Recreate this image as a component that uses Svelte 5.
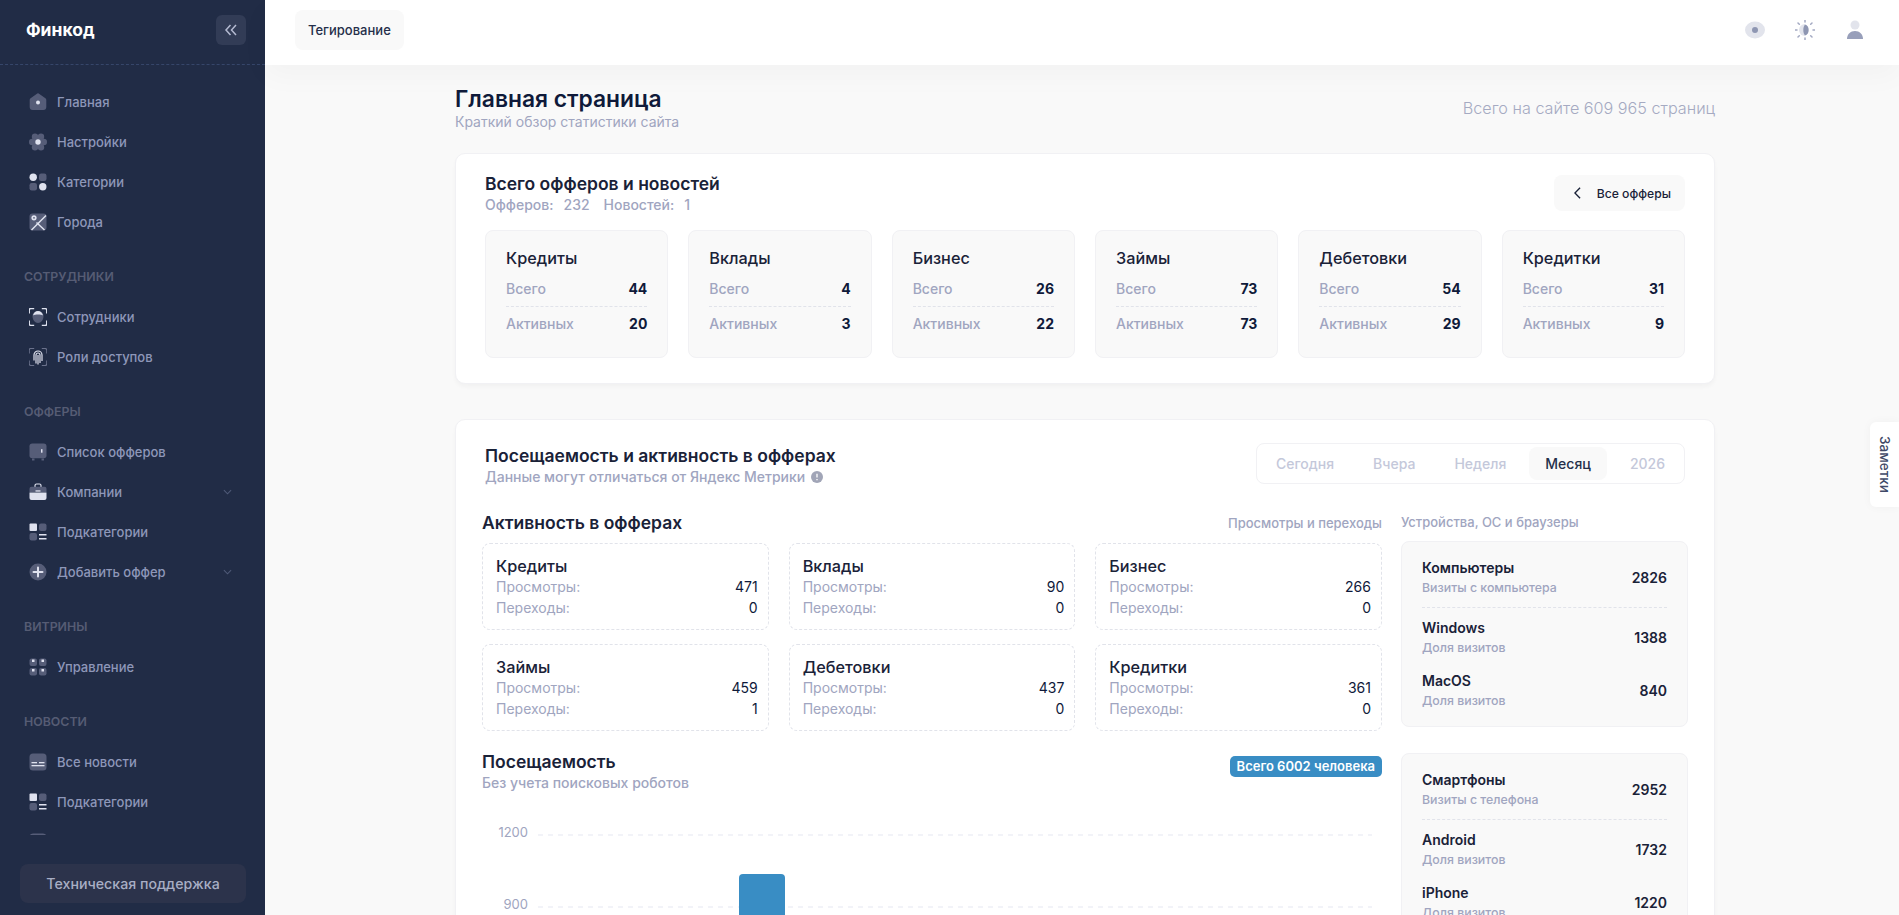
<script>
    const navGroups = [
        { items: [
            { icon: "home", label: "Главная" },
            { icon: "gear", label: "Настройки" },
            { icon: "cats", label: "Категории" },
            { icon: "map", label: "Города" }
        ] },
        { title: "Сотрудники", items: [
            { icon: "face", label: "Сотрудники" },
            { icon: "finger", label: "Роли доступов" }
        ] },
        { title: "Офферы", items: [
            { icon: "safe", label: "Список офферов" },
            { icon: "case", label: "Компании", arrow: true },
            { icon: "subs", label: "Подкатегории" },
            { icon: "plus", label: "Добавить оффер", arrow: true }
        ] },
        { title: "Витрины", items: [
            { icon: "grid", label: "Управление" }
        ] },
        { title: "Новости", items: [
            { icon: "news", label: "Все новости" },
            { icon: "subs", label: "Подкатегории" },
            { icon: "news", label: "" }
        ] }
    ];

    const totals = [
        { name: "Кредиты", all: 44, active: 20 },
        { name: "Вклады", all: 4, active: 3 },
        { name: "Бизнес", all: 26, active: 22 },
        { name: "Займы", all: 73, active: 73 },
        { name: "Дебетовки", all: 54, active: 29 },
        { name: "Кредитки", all: 31, active: 9 }
    ];

    const activity = [
        { name: "Кредиты", views: 471, clicks: 0 },
        { name: "Вклады", views: 90, clicks: 0 },
        { name: "Бизнес", views: 266, clicks: 0 },
        { name: "Займы", views: 459, clicks: 1 },
        { name: "Дебетовки", views: 437, clicks: 0 },
        { name: "Кредитки", views: 361, clicks: 0 }
    ];

    const tabs = ["Сегодня", "Вчера", "Неделя", "Месяц", "2026"];

    const devices = [
        { head: { name: "Компьютеры", sub: "Визиты с компьютера", value: 2826 }, rows: [
            { name: "Windows", sub: "Доля визитов", value: 1388 },
            { name: "MacOS", sub: "Доля визитов", value: 840 }
        ] },
        { head: { name: "Смартфоны", sub: "Визиты с телефона", value: 2952 }, rows: [
            { name: "Android", sub: "Доля визитов", value: 1732 },
            { name: "iPhone", sub: "Доля визитов", value: 1220 }
        ] }
    ];
</script>

{#snippet navIcon(name)}
    <svg class="nav-icon" viewBox="0 0 18 18" width="18" height="18">
        {#if name === "home"}
            <path class="d" d="M7.6.9a2.3 2.3 0 0 1 2.8 0l6 4.3c.6.4.9 1 .9 1.7V14a3 3 0 0 1-3 3H3.700a3 3 0 0 1-3-3V6.900c0-.7.3-1.300.9-1.700z" />
            <circle class="l" cx="9" cy="9.500" r="2" />
        {:else if name === "gear"}
            <circle class="d" cx="6" cy="3.800" r="3.200" />
            <circle class="d" cx="12" cy="3.800" r="3.200" />
            <circle class="d" cx="3.200" cy="9" r="3.200" />
            <circle class="d" cx="14.800" cy="9" r="3.200" />
            <circle class="d" cx="6" cy="14.200" r="3.200" />
            <circle class="d" cx="12" cy="14.200" r="3.200" />
            <circle class="d" cx="9" cy="9" r="5" />
            <circle class="l" cx="9" cy="9" r="2.700" />
        {:else if name === "cats"}
            <circle class="l" cx="4.200" cy="4.200" r="3.700" />
            <rect class="d" x="10" y=".5" width="7.500" height="7.500" rx="2.200" />
            <rect class="d" x=".5" y="10" width="7.500" height="7.500" rx="2.200" />
            <circle class="l" cx="13.800" cy="13.800" r="3.700" />
        {:else if name === "map"}
            <rect class="d" x=".5" y=".5" width="17" height="17" rx="3" />
            <path d="M2.500 17 17 2.500M7.500 9.500l8 7.500" stroke="#dfe2ef" stroke-width="1.500" fill="none" />
            <circle class="l" cx="5" cy="4.800" r="2.600" />
            <circle class="d" cx="5" cy="4.800" r=".9" />
        {:else if name === "face"}
            <path class="line thick" d="M.2 5.500V2.200A1.700 1.700 0 0 1 1.900.5h3.300M12.800.5h3.300a1.700 1.700 0 0 1 1.700 1.700v3.300M17.800 12.500v3.300a1.700 1.700 0 0 1-1.700 1.700h-3.300M5.200 17.500H1.900a1.700 1.700 0 0 1-1.700-1.700v-3.300" />
            <path class="d" d="M3.500 8c0-3 2.500-4.800 5.500-4.800S14.500 5 14.500 8c0 4-2.500 7-5.500 7S3.500 12 3.500 8z" />
            <path class="l" d="M4 7.500C4.500 4.800 6.500 3 9 3s4.500 1.800 5 4.500C12 6.200 6 6.200 4 7.500z" />
        {:else if name === "finger"}
            <path class="line dim" d="M.2 5.500V2.200A1.700 1.700 0 0 1 1.900.5h3.300M12.800.5h3.300a1.700 1.700 0 0 1 1.700 1.700v3.300M17.800 12.500v3.300a1.700 1.700 0 0 1-1.700 1.700h-3.300M5.200 17.500H1.900a1.700 1.700 0 0 1-1.700-1.700v-3.300" />
            <path class="line" d="M5 12.500V7a4 4 0 0 1 8 0v6M7 15.500V7a2 2 0 0 1 4 0v8M9 7v9.500" />
        {:else if name === "safe"}
            <rect class="d" x=".5" y=".5" width="17" height="14.800" rx="2.800" />
            <rect class="d" x="3" y="15.500" width="2.500" height="2" />
            <rect class="d" x="12.500" y="15.500" width="2.500" height="2" />
            <rect class="l" x="12" y="6.200" width="1.500" height="3.500" />
        {:else if name === "case"}
            <path class="line" d="M6 4V2.500a1.500 1.500 0 0 1 1.500-1.500h3A1.500 1.500 0 0 1 12 2.500V4" />
            <path class="d" d="M2.500 3.700h13a2 2 0 0 1 2 2V9H.5V5.700a2 2 0 0 1 2-2z" />
            <path class="l" d="M.5 9.500h17V15a2 2 0 0 1-2 2h-13a2 2 0 0 1-2-2z" />
            <rect class="l" x="6.500" y="7.300" width="5" height="1.300" />
        {:else if name === "subs"}
            <rect class="l" x=".5" y=".5" width="7.500" height="7.500" rx="1" />
            <rect class="d" x="10" y=".5" width="7.500" height="7.500" rx="2" />
            <rect class="d" x=".5" y="10" width="7.500" height="7.500" rx="2" />
            <rect class="l" x="10" y="11" width="7.500" height="1.500" />
            <rect class="l" x="10" y="15" width="7.500" height="1.500" />
        {:else if name === "plus"}
            <circle class="d" cx="9" cy="9" r="8.500" />
            <path d="M9 4.500v9M4.500 9h9" stroke="#dfe2ef" stroke-width="2" stroke-linecap="round" />
        {:else if name === "grid"}
            <rect class="d" x=".5" y=".5" width="7.500" height="7.500" rx="2" />
            <rect class="d" x="10" y=".5" width="7.500" height="7.500" rx="2" />
            <rect class="d" x=".5" y="10" width="7.500" height="7.500" rx="2" />
            <rect class="d" x="10" y="10" width="7.500" height="7.500" rx="2" />
            <rect class="l" x="3" y="1.500" width="2.500" height="2.500" />
            <rect class="l" x="12.500" y="1.500" width="2.500" height="2.500" />
            <rect class="l" x="3" y="11" width="2.500" height="2.500" />
            <rect class="l" x="12.500" y="11" width="2.500" height="2.500" />
        {:else if name === "news"}
            <rect class="d" x=".5" y=".5" width="17" height="17" rx="3.500" />
            <rect class="l" x="2.500" y="9" width="5.500" height="1.300" />
            <rect class="l" x="10" y="9" width="5.500" height="1.300" />
            <rect class="l" x="2.500" y="12" width="13" height="1.300" />
        {/if}
    </svg>
{/snippet}

{#snippet deviceRow(row)}
    <div class="device-row">
        <div>
            <div class="device-name">{row.name}</div>
            <div class="device-sub">{row.sub}</div>
        </div>
        <div class="device-value">{row.value}</div>
    </div>
{/snippet}

<div class="layout">
    <aside class="sidebar">
        <div class="brand">
            <span class="logo">Финкод</span>
            <button class="collapse" type="button" aria-label="Свернуть">
                <svg viewBox="0 0 14 14" width="14" height="14" fill="none" stroke="#b5bbd2" stroke-width="1.500">
                    <path d="M6.500 2 2 7l4.500 5M12 2 7.500 7l4.500 5" />
                </svg>
            </button>
        </div>

        <nav class="nav">
            {#each navGroups as group}
                {#if group.title}
                    <div class="nav-title">{group.title}</div>
                {/if}
                {#each group.items as item}
                    <div class="nav-item">
                        {@render navIcon(item.icon)}
                        <span class="nav-label">{item.label}</span>
                        {#if item.arrow}
                            <svg class="nav-arrow" viewBox="0 0 10 6" width="9" height="6" fill="none" stroke="#4f5a78" stroke-width="1.200">
                                <path d="M1 1l4 4 4-4" />
                            </svg>
                        {/if}
                    </div>
                {/each}
            {/each}
        </nav>

        <div class="support-wrap">
            <button class="support" type="button">Техническая поддержка</button>
        </div>
    </aside>

    <div class="main">
        <header class="topbar">
            <button class="tag-btn" type="button">Тегирование</button>
            <div class="top-icons">
                <svg viewBox="0 0 20 20" width="20" height="20">
                    <ellipse cx="10" cy="10" rx="10" ry="8.500" fill="#e2e4ec" />
                    <circle cx="10" cy="10" r="3" fill="#8e96b2" />
                </svg>
                <svg viewBox="0 0 20 20" width="20" height="20">
                    <path d="M10 4a6 6 0 0 0 0 12z" fill="#e2e4ec" />
                    <path d="M10 4.500c2.500.5 3.700 3 3.700 5.500s-1.200 5-3.700 5.500c-1.200-1.500-1.700-3.500-1.700-5.500s.5-4 1.700-5.500z" fill="#8e96b2" />
                    <path d="M10 0v2M10 18v2M0 10h2M18 10h2M3 3l1.300 1.300M15.700 15.700 17 17M3 17l1.300-1.300M15.700 4.300 17 3" stroke="#a3a9c2" stroke-width="1.500" stroke-linecap="round" />
                </svg>
                <svg viewBox="0 0 20 20" width="20" height="20">
                    <circle cx="10" cy="5" r="4.500" fill="#e2e4ec" />
                    <path d="M2 19c0-5 3.500-8 8-8s8 3 8 8z" fill="#989fba" />
                </svg>
            </div>
        </header>

        <main class="content">
            <div class="page-head">
                <div>
                    <h1>Главная страница</h1>
                    <p>Краткий обзор статистики сайта</p>
                </div>
                <div class="page-total">Всего на сайте 609 965 страниц</div>
            </div>

            <section class="card card-totals">
                <div class="card-head">
                    <div>
                        <h2>Всего офферов и новостей</h2>
                        <div class="muted big counts">
                            <span>Офферов:</span><span class="count">232</span>
                            <span class="next">Новостей:</span><span class="count">1</span>
                        </div>
                    </div>
                    <button class="all-btn" type="button">
                        <svg viewBox="0 0 8 14" width="7" height="12" fill="none" stroke="#1a2238" stroke-width="1.600">
                            <path d="M7 1 1 7l6 6" />
                        </svg>
                        Все офферы
                    </button>
                </div>
                <div class="totals">
                    {#each totals as t}
                        <div class="total">
                            <div class="total-name">{t.name}</div>
                            <div class="total-row first"><span>Всего</span><b>{t.all}</b></div>
                            <div class="total-row"><span>Активных</span><b>{t.active}</b></div>
                        </div>
                    {/each}
                </div>
            </section>

            <section class="card card-stats">
                <div class="card-head stats-head">
                    <div>
                        <h2>Посещаемость и активность в офферах</h2>
                        <div class="muted big note">
                            Данные могут отличаться от Яндекс Метрики
                            <svg viewBox="0 0 12 12" width="12" height="12">
                                <circle cx="6" cy="6" r="6" fill="#a1a5b7" />
                                <path d="M6 2.800v3.600M6 8v1.200" stroke="#fff" stroke-width="1.300" />
                            </svg>
                        </div>
                    </div>
                    <div class="tabs">
                        {#each tabs as tab}
                            <span class="tab" class:active={tab === "Месяц"}>{tab}</span>
                        {/each}
                    </div>
                </div>

                <div class="columns">
                    <div class="col-left">
                        <div class="section-head">
                            <h3>Активность в офферах</h3>
                            <span class="muted">Просмотры и переходы</span>
                        </div>
                        <div class="activity">
                            {#each activity as a}
                                <div class="act">
                                    <div class="act-name">{a.name}</div>
                                    <div class="act-row"><span>Просмотры:</span><em>{a.views}</em></div>
                                    <div class="act-row"><span>Переходы:</span><em>{a.clicks}</em></div>
                                </div>
                            {/each}
                        </div>

                        <div class="visits-head">
                            <div>
                                <h3>Посещаемость</h3>
                                <div class="muted big">Без учета поисковых роботов</div>
                            </div>
                            <span class="badge">Всего 6002 человека</span>
                        </div>
                        <svg class="chart" viewBox="0 0 900 100" width="900" height="100">
                            <text x="46" y="22">1200</text>
                            <line x1="56" x2="890" y1="20" y2="20" />
                            <text x="46" y="94">900</text>
                            <line x1="56" x2="890" y1="92" y2="92" />
                            <path class="bar" d="M257 110V63a4 4 0 0 1 4-4h38a4 4 0 0 1 4 4v47z" />
                        </svg>
                    </div>

                    <div class="col-right">
                        <div class="muted side-title">Устройства, ОС и браузеры</div>
                        {#each devices as d}
                            <div class="panel">
                                <div class="panel-head">{@render deviceRow(d.head)}</div>
                                {#each d.rows as row}
                                    {@render deviceRow(row)}
                                {/each}
                            </div>
                        {/each}
                    </div>
                </div>
            </section>
        </main>
    </div>

    <div class="notes">Заметки</div>
</div>

<style>
    :global(body) {
        margin: 0;
        overflow: hidden;
        background: #f9f9f9;
        font-family: Inter, "Noto Sans", sans-serif;
    }

    h1, h2, h3, p {
        margin: 0;
    }

    button {
        border: none;
        font-family: inherit;
        cursor: pointer;
    }

    .layout {
        display: flex;
        height: 915px;
        overflow: hidden;
        position: relative;
    }

    /* sidebar */
    .sidebar {
        width: 265px;
        flex-shrink: 0;
        display: flex;
        flex-direction: column;
        background: #212c46;
    }

    .brand {
        height: 59px;
        flex-shrink: 0;
        display: flex;
        align-items: center;
        justify-content: space-between;
        padding: 0 19px 5px 26px;
        border-bottom: 1px dashed #36466a;
    }

    .logo {
        color: #fff;
        font-size: 17.500px;
        font-weight: 700;
    }

    .collapse {
        width: 30px;
        height: 30px;
        padding: 0;
        display: flex;
        align-items: center;
        justify-content: center;
        border-radius: 6px;
        background: #323c56;
    }

    .nav {
        flex: 1;
        min-height: 0;
        overflow: hidden;
        padding-top: 17px;
    }

    .nav-title {
        height: 20px;
        line-height: 20px;
        margin: 25px 0 10px;
        padding-left: 24px;
        color: #565c74;
        font-size: 12.350px;
        font-weight: 600;
        text-transform: uppercase;
    }

    .nav-item {
        height: 40px;
        display: flex;
        align-items: center;
        gap: 10px;
        padding: 0 33px 0 29px;
    }

    .nav-icon {
        flex-shrink: 0;
    }

    .d {
        fill: #565d78;
    }

    .l {
        fill: #dfe2ef;
    }

    .line {
        fill: none;
        stroke: #dfe2ef;
        stroke-width: 1.200;
    }

    .line.thick {
        stroke-width: 1.500;
    }

    .line.dim {
        stroke: #6a718b;
    }

    .nav-label {
        flex: 1;
        color: #8e97b9;
        font-size: 13px;
        font-weight: 500;
    }

    .support-wrap {
        flex-shrink: 0;
        padding: 29px 19px 12px 20px;
    }

    .support {
        width: 100%;
        height: 39px;
        border-radius: 8px;
        background: #2c334b;
        color: #a8aec4;
        font-size: 14.200px;
        font-weight: 500;
    }

    /* topbar */
    .main {
        flex: 1;
        min-width: 0;
        display: flex;
        flex-direction: column;
    }

    .topbar {
        height: 60px;
        padding: 0 34px 5px 30px;
        flex-shrink: 0;
        display: flex;
        align-items: center;
        justify-content: space-between;
        background: #fff;
        box-shadow: 0 10px 30px rgba(0, 0, 0, 0.03);
    }

    .tag-btn {
        height: 40px;
        padding: 0 13px;
        border-radius: 8px;
        background: #f9f9f9;
        color: #252f4a;
        font-size: 13px;
        font-weight: 500;
    }

    .top-icons {
        display: flex;
        gap: 30px;
    }

    /* page */
    .content {
        width: 1260px;
        padding: 21px 0 0 190px;
    }

    .page-head {
        display: flex;
        justify-content: space-between;
        align-items: flex-start;
        margin-bottom: 23px;
    }

    h1 {
        color: #0f1a3a;
        font-size: 22.800px;
        line-height: 26px;
        font-weight: 600;
    }

    .page-head p {
        margin-top: 2px;
        color: #a0a5c0;
        font-size: 14px;
        line-height: 16px;
    }

    .page-total {
        margin-top: 12px;
        color: #a5aac2;
        font-size: 16.200px;
        line-height: 20px;
        font-weight: 300;
    }

    .muted {
        color: #a0a5c0;
        font-size: 13px;
        line-height: 16px;
        font-weight: 500;
    }

    .muted.big {
        font-size: 14px;
    }

    .card {
        background: #fff;
        border: 1px solid #f1f1f4;
        border-radius: 10px;
        box-shadow: 0 3px 4px rgba(0, 0, 0, 0.03);
    }

    .card-totals {
        padding: 19px 29px 25px 29px;
        margin-bottom: 35px;
    }

    .card-head {
        display: flex;
        justify-content: space-between;
        align-items: flex-start;
    }

    h2, h3 {
        color: #1a2238;
        font-size: 17.500px;
        line-height: 22px;
        font-weight: 600;
    }

    .counts {
        display: flex;
        margin-top: 2px;
    }

    .count {
        margin-left: 10px;
    }

    .next {
        margin-left: 14px;
    }

    .all-btn {
        display: flex;
        align-items: center;
        gap: 16px;
        height: 36px;
        margin-top: 2px;
        padding: 0 14px 0 20px;
        border-radius: 8px;
        background: #f9f9f9;
        color: #1a2238;
        font-size: 12.200px;
        font-weight: 500;
    }

    .totals {
        display: grid;
        grid-template-columns: repeat(6, 1fr);
        gap: 20px;
        margin-top: 17px;
    }

    .total {
        height: 128px;
        box-sizing: border-box;
        padding: 17px 20px 0;
        background: #f9f9f9;
        border: 1px solid #f1f1f4;
        border-radius: 8px;
    }

    .total-name {
        color: #1a2238;
        font-size: 16.250px;
        line-height: 20px;
        font-weight: 500;
    }

    .total-row {
        display: flex;
        justify-content: space-between;
        color: #a0a5c0;
        font-size: 14px;
        line-height: 20px;
        font-weight: 500;
        padding-top: 7px;
    }

    .total-row.first {
        margin-top: 4px;
        padding-bottom: 7px;
        border-bottom: 1px dashed #e1e3ea;
    }

    .total-row b {
        color: #0f1a3a;
        font-size: 14px;
        font-weight: 700;
    }

    .card-stats {
        padding: 25px 26px 0 26px;
    }

    .stats-head {
        padding: 0 3px;
    }

    .note {
        display: flex;
        align-items: center;
        gap: 6px;
        margin-top: 2px;
    }

    .tabs {
        display: flex;
        align-items: center;
        gap: 7px;
        height: 41px;
        box-sizing: border-box;
        margin-top: -2px;
        padding: 3px;
        border: 1px solid #f1f1f4;
        border-radius: 8px;
    }

    .tab {
        height: 33px;
        line-height: 33px;
        padding: 0 16px;
        border-radius: 8px;
        color: #c4c8da;
        font-size: 14px;
        font-weight: 500;
    }

    .tab.active {
        background: #f9f9f9;
        color: #252f4a;
    }

    .columns {
        display: flex;
        gap: 19px;
        margin-top: 27px;
    }

    .col-left {
        width: 900px;
        flex-shrink: 0;
    }

    .section-head {
        display: flex;
        justify-content: space-between;
        align-items: center;
        margin-bottom: 9px;
    }

    .activity {
        display: grid;
        grid-template-columns: repeat(3, 1fr);
        gap: 14px 20px;
    }

    .act {
        height: 87px;
        box-sizing: border-box;
        padding: 12px 10px 0 13px;
        border: 1px dashed #e1e3ea;
        border-radius: 8px;
    }

    .act-name {
        color: #1a2238;
        font-size: 16.250px;
        line-height: 20px;
        font-weight: 500;
    }

    .act-row {
        display: flex;
        justify-content: space-between;
        color: #a0a5c0;
        font-size: 14px;
        line-height: 21px;
    }

    .act-row em {
        color: #0f1a3a;
        font-style: normal;
    }

    .visits-head {
        display: flex;
        justify-content: space-between;
        align-items: flex-start;
        margin-top: 20px;
    }

    .visits-head .muted {
        margin-top: 2px;
    }

    .badge {
        margin-top: 5px;
        padding: 0 7px;
        height: 21px;
        line-height: 21px;
        border-radius: 5px;
        background: #398dc4;
        color: #fff;
        font-size: 13px;
        font-weight: 600;
    }

    .chart {
        display: block;
        margin-top: 24px;
        overflow: visible;
    }

    .chart text {
        fill: #a0a5c0;
        font-size: 13px;
        text-anchor: end;
    }

    .chart line {
        stroke: #eef0f6;
        stroke-width: 1.500;
        stroke-dasharray: 5 5;
    }

    .bar {
        fill: #398dc4;
    }

    .col-right {
        width: 287px;
        flex-shrink: 0;
    }

    .side-title {
        height: 18px;
        line-height: 18px;
        margin: 1px 0 10px;
    }

    .panel {
        margin-bottom: 26px;
        padding: 16px 20px;
        background: #f9f9f9;
        border: 1px solid #f1f1f4;
        border-radius: 8px;
    }

    .panel-head {
        margin-bottom: 10px;
        padding-bottom: 10px;
        border-bottom: 1px dashed #e1e3ea;
    }

    .device-row {
        display: flex;
        justify-content: space-between;
        align-items: center;
    }

    .device-row + .device-row {
        margin-top: 14px;
    }

    .device-name {
        color: #1a2238;
        font-size: 14px;
        line-height: 20px;
        font-weight: 600;
    }

    .device-sub {
        margin-top: 1px;
        color: #a0a5c0;
        font-size: 12.350px;
        line-height: 18px;
        font-weight: 500;
    }

    .device-value {
        color: #1a2238;
        font-size: 14px;
        font-weight: 600;
    }

    /* side tab on the right edge */
    .notes {
        position: absolute;
        top: 422px;
        right: 0;
        width: 29px;
        height: 85px;
        display: flex;
        align-items: center;
        justify-content: center;
        writing-mode: vertical-rl;
        background: #fff;
        border-radius: 6px 0 0 6px;
        box-shadow: 0 0 10px rgba(0, 0, 0, 0.04);
        color: #3f4a68;
        font-size: 13.500px;
        font-weight: 500;
    }
</style>
